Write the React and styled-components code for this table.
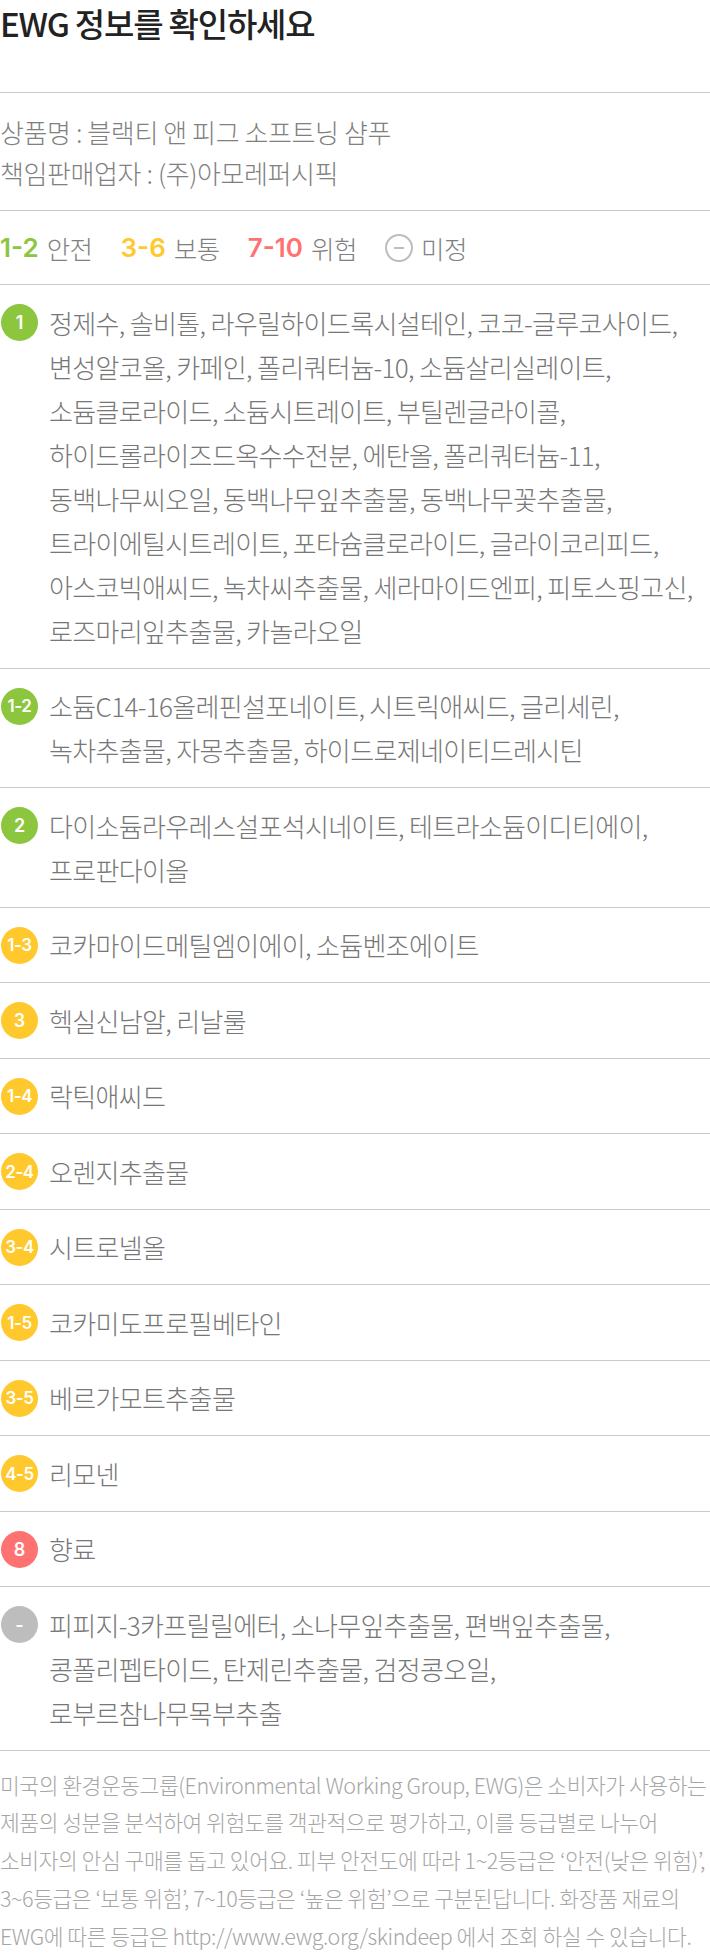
import React from "react";
import styled, { createGlobalStyle } from "styled-components";

const GlobalStyle = createGlobalStyle`
  html, body { margin: 0; padding: 0; background: #fff; }
  body { font-family: "Noto Sans CJK KR", "Noto Sans", sans-serif; }
  * { box-sizing: border-box; }
`;

const COLORS = {
  green: "#8cc63f",
  yellow: "#ffc92e",
  red: "#ff7272",
  gray: "#bdbdbd",
};

const Page = styled.div`
  width: 710px;
  background: #fff;
`;

const Title = styled.h1`
  margin: 0;
  height: 93px;
  border-bottom: 1px solid #cacaca;
  font-size: 33px;
  font-weight: 500;
  line-height: 46px;
  letter-spacing: -1.2px;
  color: #222;
`;

const Info = styled.div`
  padding: 18px 0 17px;
  border-bottom: 1px solid #cacaca;
  font-size: 26px;
  font-weight: 300;
  line-height: 41px;
  letter-spacing: -0.4px;
  color: #808080;
`;

const Legend = styled.div`
  height: 74px;
  border-bottom: 1px solid #cacaca;
  display: flex;
  align-items: center;
  gap: 28px;
`;

const LegendItem = styled.div`
  display: flex;
  align-items: center;
  gap: 8px;
`;

const LegendNum = styled.span`
  font-family: Inter, "Open Sans", sans-serif;
  font-weight: 600;
  font-size: 26px;
  color: ${(p) => p.$color};
`;

const LegendWord = styled.span`
  font-size: 25.5px;
  font-weight: 300;
  letter-spacing: -0.5px;
  color: #808080;
`;

const MinusCircle = styled.span`
  width: 28px;
  height: 28px;
  border: 2px solid #bdbdbd;
  border-radius: 50%;
  display: flex;
  align-items: center;
  justify-content: center;
  &::after {
    content: "";
    width: 10px;
    height: 2px;
    background: #bdbdbd;
  }
`;

const Row = styled.div`
  display: flex;
  align-items: flex-start;
  padding: 15.5px 0 15px;
  border-bottom: 1px solid #cacaca;
`;

const BadgeSlot = styled.div`
  height: 44px;
  display: flex;
  align-items: center;
  margin-left: 1px;
  margin-right: 11px;
  flex: none;
`;

const Badge = styled.span`
  width: 37px;
  height: 37px;
  border-radius: 50%;
  background: ${(p) => COLORS[p.$tone]};
  color: #fff;
  display: flex;
  align-items: center;
  justify-content: center;
  font-family: Inter, "Open Sans", sans-serif;
  font-weight: 600;
  font-size: ${(p) => (p.$wide ? "17px" : "18px")};
  letter-spacing: ${(p) => (p.$wide ? "-0.5px" : "0")};
`;

const Names = styled.div`
  font-size: 26px;
  font-weight: 300;
  line-height: 44px;
  letter-spacing: -0.65px;
  color: #777;
`;

const Line = styled.div`
  white-space: nowrap;
`;

const Footer = styled.div`
  padding: 15px 0 0;
  font-size: 21.5px;
  font-weight: 300;
  line-height: 37.75px;
  letter-spacing: -0.45px;
  color: #a6a6a6;
`;

const groups = [
  {
    grade: "1",
    tone: "green",
    lines: [
      "정제수, 솔비톨, 라우릴하이드록시설테인, 코코-글루코사이드,",
      "변성알코올, 카페인, 폴리쿼터늄-10, 소듐살리실레이트,",
      "소듐클로라이드, 소듐시트레이트, 부틸렌글라이콜,",
      "하이드롤라이즈드옥수수전분, 에탄올, 폴리쿼터늄-11,",
      "동백나무씨오일, 동백나무잎추출물, 동백나무꽃추출물,",
      "트라이에틸시트레이트, 포타슘클로라이드, 글라이코리피드,",
      "아스코빅애씨드, 녹차씨추출물, 세라마이드엔피, 피토스핑고신,",
      "로즈마리잎추출물, 카놀라오일",
    ],
  },
  {
    grade: "1-2",
    tone: "green",
    lines: [
      "소듐C14-16올레핀설포네이트, 시트릭애씨드, 글리세린,",
      "녹차추출물, 자몽추출물, 하이드로제네이티드레시틴",
    ],
  },
  {
    grade: "2",
    tone: "green",
    lines: ["다이소듐라우레스설포석시네이트, 테트라소듐이디티에이,", "프로판다이올"],
  },
  { grade: "1-3", tone: "yellow", lines: ["코카마이드메틸엠이에이, 소듐벤조에이트"] },
  { grade: "3", tone: "yellow", lines: ["헥실신남알, 리날룰"] },
  { grade: "1-4", tone: "yellow", lines: ["락틱애씨드"] },
  { grade: "2-4", tone: "yellow", lines: ["오렌지추출물"] },
  { grade: "3-4", tone: "yellow", lines: ["시트로넬올"] },
  { grade: "1-5", tone: "yellow", lines: ["코카미도프로필베타인"] },
  { grade: "3-5", tone: "yellow", lines: ["베르가모트추출물"] },
  { grade: "4-5", tone: "yellow", lines: ["리모넨"] },
  { grade: "8", tone: "red", lines: ["향료"] },
  {
    grade: "-",
    tone: "gray",
    lines: [
      "피피지-3카프릴릴에터, 소나무잎추출물, 편백잎추출물,",
      "콩폴리펩타이드, 탄제린추출물, 검정콩오일,",
      "로부르참나무목부추출",
    ],
  },
];

const footerLines = [
  "미국의 환경운동그룹(Environmental Working Group, EWG)은 소비자가 사용하는",
  "제품의 성분을 분석하여 위험도를 객관적으로 평가하고, 이를 등급별로 나누어",
  "소비자의 안심 구매를 돕고 있어요. 피부 안전도에 따라 1~2등급은 ‘안전(낮은 위험)’,",
  "3~6등급은 ‘보통 위험’, 7~10등급은 ‘높은 위험’으로 구분된답니다. 화장품 재료의",
  "EWG에 따른 등급은 http://www.ewg.org/skindeep 에서 조회 하실 수 있습니다.",
];

const legend = [
  { num: "1-2", color: COLORS.green, word: "안전" },
  { num: "3-6", color: COLORS.yellow, word: "보통" },
  { num: "7-10", color: COLORS.red, word: "위험" },
];

export default function App() {
  return (
    <Page>
      <GlobalStyle />
      <Title>EWG 정보를 확인하세요</Title>
      <Info>
        <Line>상품명 : 블랙티 앤 피그 소프트닝 샴푸</Line>
        <Line>책임판매업자 : (주)아모레퍼시픽</Line>
      </Info>
      <Legend>
        {legend.map((l) => (
          <LegendItem key={l.num}>
            <LegendNum $color={l.color}>{l.num}</LegendNum>
            <LegendWord>{l.word}</LegendWord>
          </LegendItem>
        ))}
        <LegendItem>
          <MinusCircle />
          <LegendWord>미정</LegendWord>
        </LegendItem>
      </Legend>
      {groups.map((g) => (
        <Row key={g.grade}>
          <BadgeSlot>
            <Badge $tone={g.tone} $wide={g.grade.length > 1}>
              {g.grade}
            </Badge>
          </BadgeSlot>
          <Names>
            {g.lines.map((l) => (
              <Line key={l}>{l}</Line>
            ))}
          </Names>
        </Row>
      ))}
      <Footer>
        {footerLines.map((l) => (
          <Line key={l}>{l}</Line>
        ))}
      </Footer>
    </Page>
  );
}
